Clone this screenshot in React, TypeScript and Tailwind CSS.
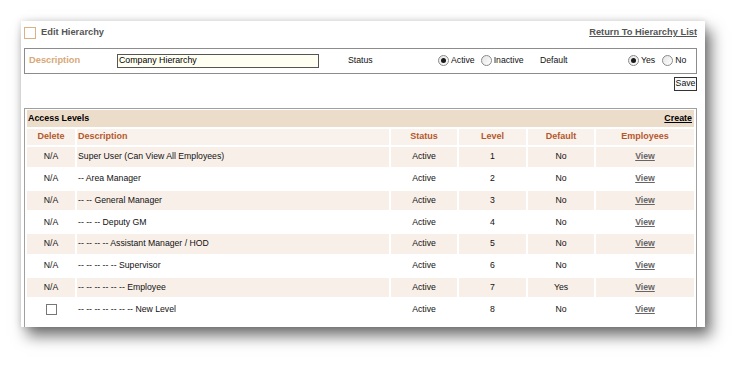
import React from "react";

type Level = {
  description: string;
  level: number;
  isDefault: string;
  canDelete?: boolean;
};

const levels: Level[] = [
  { description: "Super User (Can View All Employees)", level: 1, isDefault: "No" },
  { description: "-- Area Manager", level: 2, isDefault: "No" },
  { description: "-- -- General Manager", level: 3, isDefault: "No" },
  { description: "-- -- -- Deputy GM", level: 4, isDefault: "No" },
  { description: "-- -- -- -- Assistant Manager / HOD", level: 5, isDefault: "No" },
  { description: "-- -- -- -- -- Supervisor", level: 6, isDefault: "No" },
  { description: "-- -- -- -- -- -- Employee", level: 7, isDefault: "Yes" },
  { description: "-- -- -- -- -- -- -- New Level", level: 8, isDefault: "No", canDelete: true },
];

const cols = "grid grid-cols-[48px_312px_66px_67px_66px_98px] gap-x-[2px]";

function Radio({ checked, label }: { checked?: boolean; label: string }) {
  return (
    <span className="flex items-center gap-[2px]">
      <span className="flex h-[11px] w-[11px] items-center justify-center rounded-full border border-[#8a8a8a] bg-gradient-to-br from-[#e4e4e4] to-white">
        {checked && <span className="h-[5px] w-[5px] rounded-full bg-[#1a1a1a]" />}
      </span>
      <span>{label}</span>
    </span>
  );
}

export default function App() {
  return (
    <div className="min-h-[369px] bg-white pl-[21px] pt-[21px] font-['Liberation_Sans',Arial,sans-serif] text-[8.7px] text-[#111]">
      <div className="h-[306px] w-[684px] overflow-hidden bg-white pl-[3px] pr-[8px] pt-[6px] shadow-[0_0_7px_rgba(0,0,0,0.14),6px_9px_14px_rgba(0,0,0,0.55)]">
        {/* Title row */}
        <div className="flex h-[12px] items-center justify-between">
          <div className="flex items-center gap-[5px]">
            <span className="h-[12px] w-[12px] border-[1.5px] border-[#dcb088]" />
            <span className="text-[9.3px] font-bold text-[#555]">Edit Hierarchy</span>
          </div>
          <a className="text-[9.3px] font-bold text-[#555] underline">Return To Hierarchy List</a>
        </div>

        {/* Form */}
        <div className="mt-[9px] flex h-[26px] items-center border border-[#8c8c8c] pl-[4px]">
          <span className="w-[88px] text-[9.3px] font-bold text-[#d8a878]">Description</span>
          <div className="flex h-[14px] w-[202px] items-center border border-[#555] bg-[#fffff2] pl-[1px] text-[8.8px] text-black">
            Company Hierarchy
          </div>
          <span className="ml-[29px] w-[90px]">Status</span>
          <div className="flex w-[102px] items-center gap-[6px]">
            <Radio checked label="Active" />
            <Radio label="Inactive" />
          </div>
          <span className="w-[88px]">Default</span>
          <div className="flex items-center gap-[7px]">
            <Radio checked label="Yes" />
            <Radio label="No" />
          </div>
        </div>

        <div className="mt-[3px] flex justify-end">
          <button className="flex h-[14px] w-[23px] items-center justify-center border border-[#333] bg-[#fafafa] text-[8.7px]">
            Save
          </button>
        </div>

        {/* Access levels table */}
        <div className="mt-[17px] h-[240px] border border-[#a0a0a0] px-[2px] pt-[1px]">
          <div className="flex h-[17px] items-center justify-between bg-[#ecdcca] pl-[1px] pr-[2px]">
            <span className="text-[8.9px] font-bold text-black">Access Levels</span>
            <a className="text-[8.9px] font-bold text-black underline">Create</a>
          </div>

          <div className="mt-[2px] flex flex-col gap-y-[2px]">
            <div className={`${cols} h-[16px] text-[9px] font-bold text-[#b4582b]`}>
              <div className="flex items-center justify-center bg-[#f9f1ec]">Delete</div>
              <div className="flex items-center bg-[#f9f1ec] pl-[1px]">Description</div>
              <div className="flex items-center justify-center bg-[#f9f1ec]">Status</div>
              <div className="flex items-center justify-center bg-[#f9f1ec]">Level</div>
              <div className="flex items-center justify-center bg-[#f9f1ec]">Default</div>
              <div className="flex items-center justify-center bg-[#f9f1ec]">Employees</div>
            </div>

            {levels.map((row, i) => {
              const bg = i % 2 === 0 ? "bg-[#f8efe9]" : "bg-white";
              return (
                <div key={row.level} className={`${cols} h-[19.75px]`}>
                  <div className={`flex items-center justify-center ${bg}`}>
                    {row.canDelete ? (
                      <span className="h-[11px] w-[11px] border border-[#777] bg-white" />
                    ) : (
                      "N/A"
                    )}
                  </div>
                  <div className={`flex items-center pl-[1px] ${bg}`}>{row.description}</div>
                  <div className={`flex items-center justify-center ${bg}`}>Active</div>
                  <div className={`flex items-center justify-center ${bg}`}>{row.level}</div>
                  <div className={`flex items-center justify-center ${bg}`}>{row.isDefault}</div>
                  <div className={`flex items-center justify-center ${bg}`}>
                    <a className="font-bold text-[#666] underline">View</a>
                  </div>
                </div>
              );
            })}
          </div>
        </div>
      </div>
    </div>
  );
}
